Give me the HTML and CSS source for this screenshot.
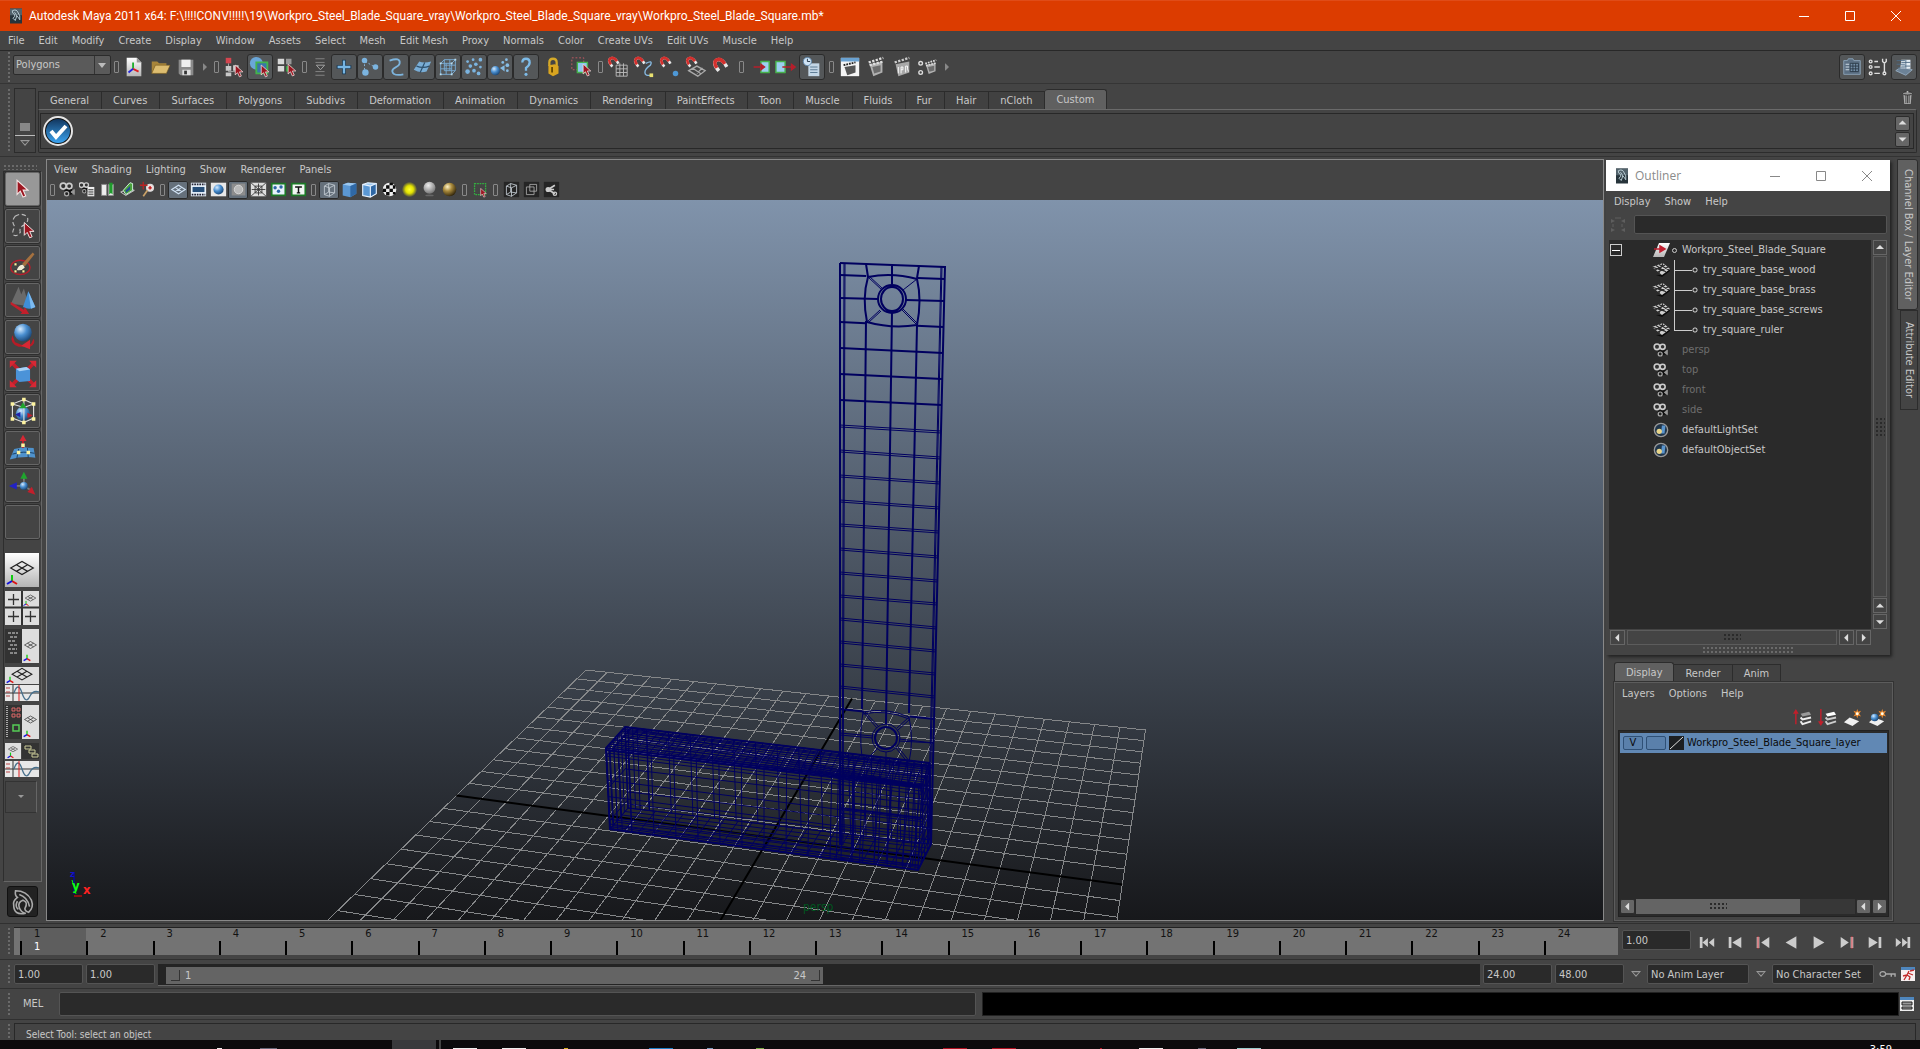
FILE: index.html
```html
<!DOCTYPE html>
<html lang="en">
<head>
<meta charset="utf-8">
<title>Autodesk Maya 2011 x64</title>
<link rel="stylesheet" href="styles.css">
</head>
<body>
<svg class="defs" aria-hidden="true">
  <defs>
    <radialGradient id="gBlue" cx=".35" cy=".3" r=".8"><stop offset="0" stop-color="#d5ebff"/><stop offset=".45" stop-color="#4a8fd0"/><stop offset="1" stop-color="#123a66"/></radialGradient>
    <radialGradient id="gGrey" cx=".4" cy=".3" r=".8"><stop offset="0" stop-color="#eee"/><stop offset="1" stop-color="#666"/></radialGradient>
    <radialGradient id="gGold" cx=".35" cy=".3" r=".8"><stop offset="0" stop-color="#fff4c8"/><stop offset=".4" stop-color="#a98a3c"/><stop offset="1" stop-color="#1e1503"/></radialGradient>
    <radialGradient id="gSun"><stop offset="0" stop-color="#ffff30"/><stop offset=".5" stop-color="#e2e200"/><stop offset="1" stop-color="#e2e200" stop-opacity="0"/></radialGradient>
    <linearGradient id="gWhite" x2="0" y2="1"><stop offset="0" stop-color="#fff"/><stop offset="1" stop-color="#b5b5b5"/></linearGradient>
    <linearGradient id="gCheck" x2="0" y2="1"><stop offset="0" stop-color="#12365e"/><stop offset="1" stop-color="#3aa3f0"/></linearGradient>
  </defs>
  <symbol id="cursor" viewBox="0 0 12 18"><path d="M1 1v13l3-3 2.500 5.500 2.500-1-2.400-5.500H11z" fill="#9c1620" stroke="#f4e4e4"/></symbol>
  <symbol id="maya" viewBox="0 0 16 20"><path d="M0 0h16v20H0z" fill="#27343b"/><path d="M0 0h16v9H0z" fill="#52626b"/><path d="M3 3q6-3 8 3 3 3 2 9-2-4-4-5l-2 6-3-3q4-3 2-5-3-1-3-5zM6 5l4 6" fill="none" stroke="#b9cdd4" stroke-width="1.300"/></symbol>
  <symbol id="new" viewBox="0 0 24 24"><path d="M4 2h11l5 5v15H4z" fill="url(#gWhite)"/><path d="M15 2v5h5z" fill="#999"/><path d="M11 14V7" stroke="#1fae2d" stroke-width="2"/><path d="M11 14l6 3" stroke="#d22" stroke-width="2"/><path d="M11 14l-5 4" stroke="#22d" stroke-width="2"/></symbol>
  <symbol id="open" viewBox="0 0 24 24"><path d="M3 19V6h6l2 2h8v4z" fill="#a8853a"/><path d="M3 19l4-9h16l-4 9z" fill="#ddbd70" stroke="#6e5317" stroke-width=".6"/></symbol>
  <symbol id="save" viewBox="0 0 24 24"><path d="M4 4h16v17H6l-2-2z" fill="#8a8a8a"/><path d="M7 4h10v8H7z" fill="#eee"/><path d="M8 15h9v6H8z" fill="#ddd"/><path d="M10 16h3v4h-3z" fill="#333"/></symbol>
  <symbol id="hier" viewBox="0 0 24 24"><path d="M6 8v9h7" stroke="#aaa" fill="none"/><path d="M3 2h6v6H3z" fill="#d3454f"/><path d="M3 11h6v5H3zM3 18h6v4H3zM11 10h6v6h-6z" fill="#c8c8c8"/><use href="#cursor" x="12" y="9" width="11" height="15"/></symbol>
  <symbol id="obj" viewBox="0 0 24 24"><circle cx="8" cy="8" r="7" fill="#6aa6d8"/><path d="M8 7h12v12H8z" fill="#3a75a8" stroke="#43b54b" stroke-width="2"/><use href="#cursor" x="12" y="9" width="11" height="15"/></symbol>
  <symbol id="comp" viewBox="0 0 24 24"><path d="M3 3h7v6H3zM3 11h7v6H3z" fill="#d8d8d8"/><path d="M12 3h6v6h-6z" fill="#999"/><path d="M12 11h6v6h-6z" fill="#35a040"/><use href="#cursor" x="13" y="8" width="11" height="15"/></symbol>
  <symbol id="bars" viewBox="0 0 24 24"><path d="M7 3h10M7 7h10M7 17h10M7 21h10" stroke="#888"/><path d="M8 10h9l-4.500 5z" fill="none" stroke="#aaa"/></symbol>
  <symbol id="plus" viewBox="0 0 24 24"><path d="M12 4v16M4 12h16" stroke="#17364f" stroke-width="4"/><path d="M12 5v14M5 12h14" stroke="#76b5e4" stroke-width="2.500"/></symbol>
  <symbol id="nodes" viewBox="0 0 24 24"><path d="M6 5v13M7 6l10 6" stroke="#8bb9dd" stroke-dasharray="2 2"/><g fill="#7bb4e0"><circle cx="6" cy="5" r="3"/><circle cx="7" cy="18" r="3.500"/><circle cx="18" cy="12" r="3"/></g></symbol>
  <symbol id="curve" viewBox="0 0 24 24"><path d="M5 5q12-4 11 3c-1 5-9 4-8 9q1 5 12 3" fill="none" stroke="#7db4dd" stroke-width="2"/></symbol>
  <symbol id="patch" viewBox="0 0 24 24"><path d="M3 15l6-9q5 2 13 0l-5 11q-8 2-14-2z" fill="#79add6"/><path d="M6 11q7 3 14 0M15 7l-5 11" stroke="#2d506d" fill="none" stroke-width="1.300"/></symbol>
  <symbol id="lattice" viewBox="0 0 24 24"><path d="M4 8h12v12H4zM8 4h12v12H8zM4 14h12M10 8v12M14 4v12M8 10h12M4 8l4-4M16 8l4-4M16 20l4-4" fill="none" stroke="#79add6"/><path d="M3 7h2v2H3zM15 7h2v2h-2zM3 19h2v2H3zM15 19h2v2h-2zM19 3h2v2h-2z" fill="#bde"/></symbol>
  <symbol id="parts" viewBox="0 0 24 24"><g fill="#7bb4e0"><circle cx="5" cy="6" r="1.500"/><circle cx="11" cy="4" r="1.500"/><circle cx="19" cy="4" r="2"/><circle cx="8" cy="11" r="2"/><circle cx="14" cy="9" r="2"/><circle cx="19" cy="12" r="1.500"/><circle cx="5" cy="17" r="2.500"/><circle cx="12" cy="16" r="2"/><circle cx="17" cy="19" r="2"/></g></symbol>
  <symbol id="emit" viewBox="0 0 24 24"><circle cx="7" cy="16" r="5" fill="url(#gBlue)"/><path d="M12 13l5-3v7z" fill="#86bce4"/><g fill="#86bce4"><circle cx="19" cy="4" r="1.500"/><circle cx="15" cy="7" r="1.500"/><circle cx="20" cy="10" r="2"/><circle cx="20" cy="16" r="1.500"/></g></symbol>
  <symbol id="quest" viewBox="0 0 24 24"><path d="M8 7q0-4 4-4t4 4q0 3-4 6v3" fill="none" stroke="#7dbbe8" stroke-width="2.500"/><circle cx="12" cy="20" r="1.700" fill="#7dbbe8"/></symbol>
  <symbol id="lock" viewBox="0 0 24 24"><path d="M8 11V7q0-4 4-4t4 4v4" fill="none" stroke="#d4a929" stroke-width="2.500"/><path d="M7 10l7-1 4 2v8l-6 3-5-3z" fill="#d9a520"/><path d="M11 12v6" stroke="#664800" stroke-width="2"/></symbol>
  <symbol id="selrect" viewBox="0 0 24 24"><path d="M2 2h13v13H2z" fill="none" stroke="#c65b64" stroke-dasharray="2 2"/><path d="M8 7h11v11H8z" fill="#8ec6ec" stroke="#45b34c" stroke-width="1.500"/><use href="#cursor" x="13" y="8" width="11" height="15"/></symbol>
  <symbol id="magnet" viewBox="0 0 24 24"><path d="M7 14Q0 6 5 3q5-2 10 7" fill="none" stroke="#e8e8e8" stroke-width="3.500"/><path d="M5 11Q1 5 5 3q4-2 8 4" fill="none" stroke="#d3302d" stroke-width="3.500"/></symbol>
  <symbol id="mgrid" viewBox="0 0 24 24"><path d="M10 10h12v12H10zM14 8v14M18 8v14M10 14h12M10 18h12" fill="none" stroke="#bbb"/><use href="#magnet" width="20" height="20"/></symbol>
  <symbol id="mcurve" viewBox="0 0 24 24"><path d="M14 8q8-4 5 2-6 4-6 8 0 4 7 3" fill="none" stroke="#86b8df" stroke-width="1.500"/><path d="M18 19h4v4h-4z" fill="#e8e070"/><use href="#magnet" width="20" height="20"/></symbol>
  <symbol id="mpoint" viewBox="0 0 24 24"><circle cx="18" cy="19" r="3" fill="#4e98d6"/><use href="#magnet" width="20" height="20"/></symbol>
  <symbol id="mplane" viewBox="0 0 24 24"><path d="M4 16l9-5 9 5-8 6zM8 13l9 6M13 19l6-6" fill="none" stroke="#aaa" stroke-width="1.400"/><use href="#magnet" width="20" height="20"/></symbol>
  <symbol id="mlive" viewBox="0 0 24 24"><use href="#magnet" x="1" y="1" width="26" height="26"/></symbol>
  <symbol id="inp" viewBox="0 0 24 24"><path d="M13 6h9v12h-9z" fill="#9ccff0" stroke="#47b24b" stroke-width="1.500"/><path d="M5 12h10M13 9l4 3-4 3z" stroke="#b51f2b" fill="#b51f2b" stroke-width="1.500"/></symbol>
  <symbol id="outp" viewBox="0 0 24 24"><path d="M1 6h10v12H1z" fill="#9ccff0" stroke="#47b24b" stroke-width="1.500"/><path d="M8 12h11M18 9l4 3-4 3z" stroke="#b51f2b" fill="#b51f2b" stroke-width="1.500"/></symbol>
  <symbol id="hist" viewBox="0 0 24 24"><path d="M8 8h12v14H8z" fill="#c3d6e6"/><path d="M10 12h8M10 15h8M10 18h8" stroke="#55748e"/><circle cx="7" cy="6" r="4.500" fill="#cfe3f5" stroke="#5d86aa"/><path d="M7 3v3h3" stroke="#234" fill="none"/></symbol>
  <symbol id="clap" viewBox="0 0 24 24"><path d="M5 9L19 6v12L9 22z" fill="#b0b0b0"/><path d="M8 12l9-2v7l-7 2z" fill="#6c6c6c"/><path d="M4 7l16-5M5 10l15-4" stroke="#ddd" stroke-width="2.500" stroke-dasharray="2.500 1.500"/></symbol>
  <symbol id="rview" viewBox="0 0 24 24"><path d="M2 2h20v20H2z" fill="#f5f5f5"/><path d="M2 2h20v4H2z" fill="#6aa2d2"/><path d="M6 12l12-2v8l-9 3z" fill="#555"/><path d="M5 10l13-3" stroke="#222" stroke-width="2" stroke-dasharray="2 1"/></symbol>
  <symbol id="ipr" viewBox="0 0 24 24"><path d="M5 9L20 6v12L8 22z" fill="#a8a8a8"/><path d="M8 12v7M11 19v-7h2v3h-2M16 18v-7h2v3l1 3" stroke="#fff" fill="none"/><path d="M4 7l16-5" stroke="#ccc" stroke-width="2.500" stroke-dasharray="2.500 1.500"/></symbol>
  <symbol id="rset" viewBox="0 0 24 24"><circle cx="4" cy="8" r="2" fill="none" stroke="#ddd" stroke-width="1.500"/><circle cx="4" cy="18" r="2" fill="none" stroke="#ddd" stroke-width="1.500"/><use href="#clap" x="6" y="2" width="18" height="20"/></symbol>
  <symbol id="chan" viewBox="0 0 24 24"><path d="M3 5h4l1-2h5l1 2h7v15H3z" fill="#5b6f83" stroke="#8ba3b8"/><path d="M10 8h9v9h-9zM13 8v9M16 8v9M10 11h9M10 14h9" fill="#7590a8" stroke="#2b3a48"/><path d="M5 9h4M5 12h4M5 15h4" stroke="#d8e4ee"/></symbol>
  <symbol id="tools" viewBox="0 0 24 24"><g fill="none" stroke="#ddd" stroke-width="1.500"><circle cx="4" cy="6" r="1.500"/><circle cx="4" cy="12" r="1.500"/><circle cx="4" cy="19" r="1.500"/><path d="M8 6h4M8 12h6M8 19h6M17 3v3l2 2 2-2V3M19 8v10"/><circle cx="19" cy="19" r="1.500"/></g></symbol>
  <symbol id="attr" viewBox="0 0 24 24"><path d="M3 16l6-4 12 3-7 6z" fill="#6c8297" stroke="#94aabd"/><path d="M9 4h10v10H8z" fill="#e4edf4"/><path d="M4 5h9M4 9h9M5 13h8M14 4v10M9 7h10M9 11h10" stroke="#4e6a84"/></symbol>
  <symbol id="trash" viewBox="0 0 16 20"><path d="M3 6h10l-1 12H4z" fill="#aaa"/><path d="M6 7v10M8 7v10M10 7v10" stroke="#333"/><ellipse cx="8" cy="5" rx="6" ry="2" fill="#999" stroke="#222"/><path d="M7 2h2v2H7z" fill="#bbb"/></symbol>
  <symbol id="cam" viewBox="0 0 20 20"><path d="M6 10l9-1 2 6-9 3z" fill="#111"/><path d="M14 13l4-3v6z" fill="#999" stroke="#999"/><circle cx="5" cy="6" r="3.500" fill="#333" stroke="#ccc" stroke-width="2"/><circle cx="12" cy="6" r="3.200" fill="#333" stroke="#ccc" stroke-width="2"/><circle cx="9" cy="15" r="2.500" fill="#222" stroke="#aaa" stroke-width="1.500"/></symbol>
  <symbol id="camlist" viewBox="0 0 20 20"><use href="#cam" x="-1" y="-1" width="16" height="18"/><path d="M10 7h8v11h-8z" fill="#eee"/><path d="M11 10h6M11 12h6M11 14h6M11 16h6" stroke="#444"/></symbol>
  <symbol id="book" viewBox="0 0 20 20"><path d="M3 4h6v13H3zM11 4h6v13h-6z" fill="#eee" stroke="#888"/><path d="M12 2h4v14l-2-2-2 2z" fill="#1f9c2c"/></symbol>
  <symbol id="imgp" viewBox="0 0 20 20"><path d="M2 13l10-4 6 2-10 6z" fill="none" stroke="#ddd"/><path d="M5 11l8-9 3 1v8l-8 5z" fill="#4aa23b" stroke="#dfe"/><path d="M8 11l5-5v4l-5 4z" fill="#234b94"/></symbol>
  <symbol id="pan" viewBox="0 0 20 20"><circle cx="13" cy="8" r="4" fill="#f6dede" stroke="#ddd" stroke-width="1.500"/><path d="M10 11l-5 7" stroke="#c9a168" stroke-width="2"/><path d="M5 1v9M1 5h9" stroke="#b22" stroke-width="1.500"/><path d="M13 6v4M11 8h4" stroke="#b11" stroke-width="1.500"/></symbol>
  <symbol id="grid" viewBox="0 0 20 20"><path d="M2 10l8-5 8 5-8 5zM6 7.500l8 5M14 7.500l-8 5" fill="none" stroke="#cfe0f2" stroke-width="1.300"/></symbol>
  <symbol id="film" viewBox="0 0 20 20"><path d="M1 2h18v16H1z" fill="#e8f1fa"/><path d="M2 4h16M2 16h16" stroke="#223" stroke-width="2" stroke-dasharray="2 1"/><path d="M3 7h14v6H3z" fill="#264e78"/></symbol>
  <symbol id="res" viewBox="0 0 20 20"><path d="M1 2h18v16H1z" fill="#e8e8e8"/><circle cx="10" cy="10" r="6" fill="url(#gBlue)"/></symbol>
  <symbol id="gate" viewBox="0 0 20 20"><path d="M2 3h16v14H2z" fill="#8d8d8d"/><circle cx="10" cy="10" r="5" fill="#b9b9b9" stroke="#ddd"/></symbol>
  <symbol id="field" viewBox="0 0 20 20"><path d="M1 2h18v16H1z" fill="#ddd"/><path d="M1 2l18 16M19 2L1 18M10 3v14M2 10h16M6 6h8v8H6z" fill="none" stroke="#333"/></symbol>
  <symbol id="safe" viewBox="0 0 20 20"><path d="M2 3h16v14H2z" fill="#e8f2fa" stroke="#1c7a26" stroke-width="2"/><g fill="#2b65a5"><circle cx="6" cy="8" r="2"/><circle cx="13" cy="7" r="2"/><circle cx="10" cy="12" r="2"/></g></symbol>
  <symbol id="title" viewBox="0 0 20 20"><path d="M2 3h16v14H2z" fill="#f2f7f2" stroke="#1c7a26" stroke-width="2"/><path d="M6 7h8M10 7v7M8 14h4" stroke="#111" stroke-width="1.700"/></symbol>
  <symbol id="wcube" viewBox="0 0 20 20"><path d="M4 6l5-3 7 2v9l-6 4-6-2zM4 6l6 2 6-3M10 8v10M9 3v10l-5 3M9 13l7 1" fill="none" stroke="#c4ccd3"/></symbol>
  <symbol id="scube" viewBox="0 0 20 20"><path d="M2 4l6-2 10 1v12l-7 4-9-2z" fill="#5b98d4"/><path d="M2 4l6-2 10 1-7 3z" fill="#9cc8ef"/><path d="M11 6l7-3v12l-7 4z" fill="#2f68a5"/></symbol>
  <symbol id="ecube" viewBox="0 0 20 20"><use href="#scube" width="20" height="20"/><path d="M2 4l6-2 10 1v12l-7 4-9-2zM2 4l9 2 7-3M11 6v13" fill="none" stroke="#e8f3ff" stroke-width="1.300"/></symbol>
  <symbol id="checker" viewBox="0 0 20 20"><circle cx="10" cy="10" r="8" fill="#eee"/><path d="M6 5h4v4H6zM14 5h3v4h-3zM10 9h4v4h-4zM2 9h4v4H2zM6 13h4v4H6zM10 2h4v3h-4zM14 13h3v3h-3z" fill="#0a0a0a"/></symbol>
  <symbol id="sun" viewBox="0 0 20 20"><circle cx="10" cy="10" r="9" fill="url(#gSun)"/></symbol>
  <symbol id="gball" viewBox="0 0 20 20"><circle cx="10" cy="8" r="7" fill="url(#gGrey)"/><ellipse cx="10" cy="17" rx="5" ry="1" fill="#666"/></symbol>
  <symbol id="yball" viewBox="0 0 20 20"><circle cx="10" cy="10" r="8" fill="url(#gGold)"/></symbol>
  <symbol id="iso" viewBox="0 0 20 20"><path d="M3 3h13v13H3z" fill="none" stroke="#33b040" stroke-width="1.500" stroke-dasharray="2 1"/><use href="#cursor" x="9" y="8" width="9" height="12"/></symbol>
  <symbol id="xray" viewBox="0 0 20 20"><path d="M1 1h18v18H1z" fill="#252525"/><use href="#wcube" width="20" height="20"/></symbol>
  <symbol id="xsq" viewBox="0 0 20 20"><path d="M1 1h18v18H1z" fill="#252525"/><path d="M4 7h9v9H4zM8 4h8v8H8z" fill="none" stroke="#aaa"/></symbol>
  <symbol id="share" viewBox="0 0 20 20"><path d="M1 1h18v18H1z" fill="#252525"/><path d="M6 10l8-5M6 10l8 5M5 10h8" stroke="#ccc" stroke-width="2"/><circle cx="6" cy="10" r="3" fill="#ccc"/><circle cx="14" cy="15" r="2" fill="none" stroke="#ccc" stroke-width="1.500"/></symbol>
  <symbol id="t-lasso" viewBox="0 0 34 34"><path d="M8 6q8-5 14 1 2 5-4 9-6 3-4 8-4 6-8 3-2-4 2-9-5-6 0-12z" fill="none" stroke="#bbb" stroke-width="1.300" stroke-dasharray="5 3"/><use href="#cursor" x="17" y="12" width="14" height="20"/></symbol>
  <symbol id="t-paint" viewBox="0 0 34 34"><ellipse cx="14" cy="22" rx="11" ry="8" fill="none" stroke="#b2202c" stroke-width="1.700"/><path d="M16 18L28 5l2 2-11 14z" fill="#a5713f"/><path d="M10 25q2-6 7-6l2 3q-3 4-9 3z" fill="#f2ecd5"/><path d="M7 17h3v3H7zM7 25h3v3H7zM16 25h3v3h-3z" fill="#fdf3a0" stroke="#222" stroke-width=".5"/></symbol>
  <symbol id="t-move" viewBox="0 0 34 34"><path d="M3 22L12 2l7 20zM10 22l8-18 6 20z" fill="#6a6a6a"/><path d="M17 25l6-18 8 18q-7 4-14 0z" fill="#3f8ed6"/><path d="M23 7l8 18-5 2z" fill="#7cbaf0"/><path d="M3 19l15 9 1-3 5 8-10 0 2-2L3 22z" fill="#c21f2b"/></symbol>
  <symbol id="t-rot" viewBox="0 0 34 34"><path d="M5 15q-4 9 7 13h13q7-3 4-9l-3 6-10 1-8-3z" fill="#b71b26"/><circle cx="17" cy="12" r="10" fill="url(#gBlue)"/><path d="M25 20l-10 7 10 4z" fill="#d62834"/></symbol>
  <symbol id="t-scale" viewBox="0 0 34 34"><path d="M4 4l26 26M30 4L4 30" stroke="#c21f2b" stroke-width="4"/><path d="M2 2h8l-8 8zM32 2v8l-8-8zM2 32v-8l8 8zM32 32h-8l8-8z" fill="#d62834"/><path d="M9 11l12-2 4 3v13l-12 1-4-3z" fill="#4b93d8"/><path d="M9 11l12-2 4 3-12 2z" fill="#a9d2f5"/></symbol>
  <symbol id="t-manip" viewBox="0 0 34 34"><circle cx="17" cy="20" r="8" fill="url(#gBlue)"/><path d="M5 9l13-5 11 5v16l-11 5-13-5zM18 4v26M5 9l13 4 11-4" fill="none" stroke="#ddd" stroke-width="1.300"/><path d="M17 7l4 7h-8z" fill="#1fa52d"/><path d="M8 21l6-3v6z" fill="#22a"/><path d="M28 22l-6-3v6z" fill="#c21f2b"/><path d="M3 7h4v4H3zM16 2h4v4h-4zM27 7h4v4h-4zM3 24h4v4H3zM27 24h4v4h-4zM16 28h4v4h-4z" fill="#fdf3a0"/></symbol>
  <symbol id="t-soft" viewBox="0 0 34 34"><path d="M2 30l5-12q6-1 10-2 6 1 12 1l2 11q-14-2-29 2z" fill="#4f92cc"/><path d="M5 24q12-4 25-1M12 18l-2 11M22 17l1 11" fill="none" stroke="#12395f"/><path d="M17 17V8" stroke="#c21f2b" stroke-width="2"/><path d="M17 2l4 7h-8z" fill="#d62834"/><path d="M15 12h4v4h-4zM10 20h4v4h-4zM21 20h4v4h-4z" fill="#fdf3a0"/></symbol>
  <symbol id="t-show" viewBox="0 0 34 34"><path d="M18 18V8M18 18l8 5M18 18H8" stroke="#777" stroke-width="2"/><path d="M18 2l4 8h-8z" fill="#1fa52d"/><path d="M1 18l9-4v8z" fill="#2222c4"/><path d="M31 28l-4-9-5 6z" fill="#c21f2b"/><circle cx="18" cy="18" r="4.500" fill="url(#gBlue)"/></symbol>
  <symbol id="plane" viewBox="0 0 34 34"><path d="M5 16l12-7 12 7-12 7zM11 12.500l12 7M23 12.500l-12 7" fill="none" stroke="#222" stroke-width="1.300"/></symbol>
  <symbol id="axis" viewBox="0 0 12 12"><path d="M6 7V1" stroke="#1c1" stroke-width="2"/><path d="M6 7l5 3" stroke="#d11" stroke-width="2"/><path d="M6 7l-5 3" stroke="#11d" stroke-width="2"/></symbol>
  <symbol id="l-single" viewBox="0 0 34 34"><path d="M0 0h34v34H0z" fill="url(#gWhite)"/><use href="#plane" width="34" height="32"/><use href="#axis" x="1" y="21" width="12" height="12"/></symbol>
  <symbol id="l-four" viewBox="0 0 34 34"><path d="M0 0h34v34H0z" fill="#ddd"/><path d="M0 16.500h34M17 0v34" stroke="#333" stroke-width="2"/><path d="M8.500 3v11M3 8.500h11M8.500 20v11M3 25.500h11M25.500 20v11M20 25.500h11" stroke="#333" stroke-width="1.300"/><use href="#plane" x="17" y="0" width="17" height="15"/><use href="#axis" x="18" y="9" width="6" height="7"/></symbol>
  <symbol id="l-out" viewBox="0 0 34 34"><path d="M0 0h17v34H0z" fill="#333"/><path d="M17 0h17v34H17z" fill="#ddd"/><path d="M3 4h10M5 8h7M3 12h8M5 16h8M3 20h9M5 24h7" stroke="#ddd" stroke-dasharray="3 1"/><use href="#plane" x="17" y="8" width="17" height="17"/><use href="#axis" x="18" y="25" width="8" height="8"/></symbol>
  <symbol id="graph" viewBox="0 0 34 16"><path d="M0 0h34v16H0z" fill="#e8e8e8"/><path d="M0 8h34" stroke="#333"/><path d="M1 3h4M1 7h4M1 11h4" stroke="#b44"/><path d="M8 0v16" stroke="#333"/><path d="M9 8q4-12 8 0t8 3q3-6 9-4" fill="none" stroke="#48708c" stroke-width="1.300"/><path d="M14 0v16" stroke="#e02020"/></symbol>
  <symbol id="l-graph" viewBox="0 0 34 34"><path d="M0 0h34v17H0z" fill="#ddd"/><use href="#plane" x="2" y="-6" width="30" height="28"/><use href="#axis" x="1" y="9" width="8" height="8"/><use href="#graph" y="18" width="34" height="16"/></symbol>
  <symbol id="l-hyper" viewBox="0 0 34 34"><path d="M0 0h17v34H0z" fill="#333"/><path d="M17 0h17v34H17z" fill="#ddd"/><path d="M2 1v32" stroke="#aaa" stroke-width="2" stroke-dasharray="1 1"/><path d="M7 3h3v3H7zM12 3h3v3h-3zM7 9h3v3H7zM12 9h3v3h-3z" fill="none" stroke="#d66"/><path d="M8 20h6v6H8z" fill="none" stroke="#5c5" stroke-width="1.500"/><use href="#plane" x="17" y="6" width="17" height="18"/><use href="#axis" x="18" y="25" width="8" height="8"/></symbol>
  <symbol id="l-persp" viewBox="0 0 34 34"><path d="M0 0h16v16H0z" fill="#ddd"/><path d="M17 0h17v16H17z" fill="#333"/><use href="#plane" width="16" height="13"/><use href="#axis" x="2" y="9" width="7" height="7"/><path d="M20 3h6v3h-6zM24 7h6v3h-6zM27 11h6v3h-6z" fill="none" stroke="#cc9"/><use href="#graph" y="18" width="34" height="16"/></symbol>
  <symbol id="m-big" viewBox="0 0 30 30"><path d="M7 3q12 0 17 10 3 8-3 13-4-1-4-4 4-7-2-9-6 2-4 8 2 6 7 6Q5 30 5 18q-1-4 4-8Q6 8 7 3zm4 4q9 3 11 13M9 14q-3 6 1 9" fill="none" stroke="#aaa" stroke-width="1.700"/></symbol>
  <symbol id="mesh" viewBox="0 0 18 14"><path d="M4 12l6 2 8-6v-2l-8 6z" fill="#0c0c0c"/><path d="M0 4l11-4 7 6-8 6z" fill="#d0d0d0"/><path d="M0 4l12 4M4 2.500L14 9M7 1.500L17 7M3 7l10-5M6 9l10-5M11 0L7 10" stroke="#2a2a2a" stroke-width="1.200"/></symbol>
  <symbol id="xform" viewBox="0 0 18 16"><path d="M7 1h11l-6 14H1z" fill="url(#gWhite)"/><path d="M2 7h7M8 4l5 3-5 3z" fill="#c02030" stroke="#c02030" stroke-width="1.500"/></symbol>
  <symbol id="set" viewBox="0 0 18 18"><circle cx="9" cy="9" r="7.500" fill="#20354a" stroke="#999" stroke-width="1.500"/><path d="M10 4h4l-1 9h-4z" fill="#5a94cc"/><circle cx="7" cy="10.500" r="3" fill="#e8d58a"/></symbol>
  <symbol id="ly-up" viewBox="0 0 20 20"><path d="M3 3v14" stroke="#c21f2b" stroke-width="1.500"/><path d="M3 1l3 5H0z" fill="#c21f2b"/><path d="M8 6l9-2 2 3-9 2z" fill="#999"/><path d="M8 10l2 2 9-2M8 14l2 3 9-3" fill="none" stroke="#eee" stroke-width="2"/></symbol>
  <symbol id="ly-dn" viewBox="0 0 20 20"><path d="M3 1v14" stroke="#c21f2b" stroke-width="1.500"/><path d="M3 19l3-5H0z" fill="#c21f2b"/><path d="M8 6l9-2 2 3-9 2z" fill="#fff"/><path d="M8 10l2 2 9-2M8 14l2 3 9-3" fill="none" stroke="#ccc" stroke-width="2"/></symbol>
  <symbol id="star" viewBox="0 0 10 10"><path d="M5 0l1 3 3-1-2 3 2 3-3-1-1 3-1-3-3 1 2-3-2-3 3 1z" fill="#f08a2c"/><circle cx="5" cy="5" r="1.500" fill="#ffe"/></symbol>
  <symbol id="ly-new" viewBox="0 0 20 20"><path d="M1 15l6-5 10 4-7 5z" fill="#f0f0f0"/><use href="#star" x="10" y="1" width="10" height="10"/></symbol>
  <symbol id="ly-sel" viewBox="0 0 20 20"><path d="M1 15l6-5 10 4-7 5z" fill="#f0f0f0"/><circle cx="7" cy="10" r="4" fill="url(#gBlue)"/><use href="#star" x="10" y="1" width="10" height="10"/></symbol>
  <symbol id="prefs" viewBox="0 0 14 14"><path d="M0 0h14v14H0z" fill="#f6f0f0"/><path d="M0 0h14v3H0z" fill="#4e86bd"/><path d="M8 4l-2 4-4 1M6 8l3 2-1 3M6 8l-3 5M7 6l5 2M9 4l4-1" stroke="#c22b2b" fill="none" stroke-width="1.300"/></symbol>
  <symbol id="script" viewBox="0 0 14 14"><path d="M0 0h14v14H0z" fill="#eee"/><path d="M0 0h14v3H0z" fill="#4e86bd"/><path d="M2 5h10v3H2zM2 10h10v2H2z" fill="#999" stroke="#222"/></symbol>
  <symbol id="key" viewBox="0 0 18 10"><ellipse cx="4" cy="5" rx="3" ry="2.500" fill="none" stroke="#aaa" stroke-width="1.300"/><path d="M7 5h10v3M13 5v3" stroke="#aaa" fill="none" stroke-width="1.500"/></symbol>
</svg>

<header class="titlebar">
  <svg class="logo"><use href="#maya"/></svg>
  <h1>Autodesk Maya 2011 x64: F:\!!!!CONV!!!!!\19\Workpro_Steel_Blade_Square_vray\Workpro_Steel_Blade_Square_vray\Workpro_Steel_Blade_Square.mb*</h1>
  <div class="winctl">
    <button aria-label="Minimize"><svg viewBox="0 0 10 10"><path d="M0 5.500h10"/></svg></button>
    <button aria-label="Maximize"><svg viewBox="0 0 10 10"><path d="M.5.5h9v9h-9z"/></svg></button>
    <button aria-label="Close"><svg viewBox="0 0 10 10"><path d="M0 0l10 10M10 0L0 10"/></svg></button>
  </div>
</header>

<nav class="menubar">
  <button>File</button><button>Edit</button><button>Modify</button><button>Create</button><button>Display</button><button>Window</button><button>Assets</button><button>Select</button><button>Mesh</button><button>Edit Mesh</button><button>Proxy</button><button>Normals</button><button>Color</button><button>Create UVs</button><button>Edit UVs</button><button>Muscle</button><button>Help</button>
</nav>

<div class="statusline">
  <i class="grip"></i>
  <div class="combo"><select aria-label="Menu set"><option>Polygons</option></select></div>
  <i class="sep s10"></i>
  <button class="ib" aria-label="New scene"><svg><use href="#new"/></svg></button>
  <button class="ib" aria-label="Open scene"><svg><use href="#open"/></svg></button>
  <button class="ib" aria-label="Save scene"><svg><use href="#save"/></svg></button>
  <i class="sep more s12"></i><i class="sep s10"></i>
  <button class="ib" aria-label="Select by hierarchy"><svg><use href="#hier"/></svg></button>
  <button class="ib on" aria-label="Select by object"><svg><use href="#obj"/></svg></button>
  <button class="ib" aria-label="Select by component"><svg><use href="#comp"/></svg></button>
  <i class="sep s10"></i>
  <button class="ib slim" aria-label="Selection mask"><svg><use href="#bars"/></svg></button>
  <button class="ib on" aria-label="Handles"><svg><use href="#plus"/></svg></button>
  <button class="ib on" aria-label="Joints"><svg><use href="#nodes"/></svg></button>
  <button class="ib on" aria-label="Curves"><svg><use href="#curve"/></svg></button>
  <button class="ib on" aria-label="Surfaces"><svg><use href="#patch"/></svg></button>
  <button class="ib on" aria-label="Deformations"><svg><use href="#lattice"/></svg></button>
  <button class="ib on" aria-label="Dynamics"><svg><use href="#parts"/></svg></button>
  <button class="ib on" aria-label="Rendering"><svg><use href="#emit"/></svg></button>
  <button class="ib on" aria-label="Miscellaneous"><svg><use href="#quest"/></svg></button>
  <button class="ib wide" aria-label="Lock selection"><svg><use href="#lock"/></svg></button>
  <button class="ib wide" aria-label="Highlight selection"><svg><use href="#selrect"/></svg></button>
  <i class="sep s10"></i>
  <button class="ib" aria-label="Snap to grids"><svg><use href="#mgrid"/></svg></button>
  <button class="ib" aria-label="Snap to curves"><svg><use href="#mcurve"/></svg></button>
  <button class="ib" aria-label="Snap to points"><svg><use href="#mpoint"/></svg></button>
  <button class="ib" aria-label="Snap to view planes"><svg><use href="#mplane"/></svg></button>
  <button class="ib" aria-label="Make live"><svg><use href="#mlive"/></svg></button>
  <i class="sep s12"></i>
  <button class="ib" aria-label="Inputs"><svg><use href="#inp"/></svg></button>
  <button class="ib" aria-label="Outputs"><svg><use href="#outp"/></svg></button>
  <button class="ib on" aria-label="Construction history"><svg><use href="#hist"/></svg></button>
  <i class="sep s12"></i>
  <button class="ib" aria-label="Render view"><svg><use href="#rview"/></svg></button>
  <button class="ib" aria-label="Render frame"><svg><use href="#clap"/></svg></button>
  <button class="ib" aria-label="IPR render"><svg><use href="#ipr"/></svg></button>
  <button class="ib" aria-label="Render settings"><svg><use href="#rset"/></svg></button>
  <i class="sep more s12"></i>
  <div class="right">
    <button class="ib on" aria-label="Channel box"><svg><use href="#chan"/></svg></button>
    <button class="ib" aria-label="Tool settings"><svg><use href="#tools"/></svg></button>
    <button class="ib on" aria-label="Attribute editor"><svg><use href="#attr"/></svg></button>
  </div>
</div>

<section class="shelf">
  <i class="grip"></i>
  <div class="shelfmenu"><i class="sq"></i><i class="ln"></i><i class="tri"></i></div>
  <div class="shelfbody">
    <div class="tabs">
      <button>General</button><button>Curves</button><button>Surfaces</button><button>Polygons</button><button>Subdivs</button><button>Deformation</button><button>Animation</button><button>Dynamics</button><button>Rendering</button><button>PaintEffects</button><button>Toon</button><button>Muscle</button><button>Fluids</button><button>Fur</button><button>Hair</button><button>nCloth</button><button class="active">Custom</button>
      <svg class="trash"><use href="#trash"/></svg>
    </div>
    <div class="shelfbox"><div class="shelfinner">
      <button class="check" aria-label="Apply"><svg viewBox="0 0 30 30"><circle cx="15" cy="15" r="14" fill="#111" stroke="#e6e6e6" stroke-width="2"/><circle cx="15" cy="15" r="12" fill="url(#gCheck)"/><path d="M8 15l5 6 10-11" fill="none" stroke="#fff" stroke-width="4"/></svg></button>
      <div class="spin"><button class="sb up" aria-label="Previous shelf row"></button><button class="sb down" aria-label="Next shelf row"></button></div>
    </div></div>
  </div>
</section>

<main class="work">
  <aside class="toolbox">
    <i class="hgrip"></i>
    <div class="toolcol">
      <div class="tools">
        <button class="tool active" aria-label="Select"><svg class="cur"><use href="#cursor"/></svg></button>
        <button class="tool" aria-label="Lasso"><svg><use href="#t-lasso"/></svg></button>
        <button class="tool" aria-label="Paint selection"><svg><use href="#t-paint"/></svg></button>
        <button class="tool" aria-label="Move"><svg><use href="#t-move"/></svg></button>
        <button class="tool" aria-label="Rotate"><svg><use href="#t-rot"/></svg></button>
        <button class="tool" aria-label="Scale"><svg><use href="#t-scale"/></svg></button>
        <button class="tool" aria-label="Universal manipulator"><svg><use href="#t-manip"/></svg></button>
        <button class="tool" aria-label="Soft modification"><svg><use href="#t-soft"/></svg></button>
        <button class="tool" aria-label="Show manipulator"><svg><use href="#t-show"/></svg></button>
        <button class="tool" aria-label="Last tool"></button>
      </div>
      <div class="layouts">
        <button aria-label="Single view"><svg><use href="#l-single"/></svg></button>
        <button aria-label="Four view"><svg><use href="#l-four"/></svg></button>
        <button aria-label="Outliner layout"><svg><use href="#l-out"/></svg></button>
        <button aria-label="Graph layout"><svg><use href="#l-graph"/></svg></button>
        <button aria-label="Hypershade layout"><svg><use href="#l-hyper"/></svg></button>
        <button aria-label="Hypergraph layout"><svg><use href="#l-persp"/></svg></button>
        <button class="drop" aria-label="More layouts"></button>
      </div>
    </div>
    <button class="mayabtn" aria-label="Maya"><svg><use href="#m-big"/></svg></button>
  </aside>

  <section class="panel">
    <nav class="panelmenu"><button>View</button><button>Shading</button><button>Lighting</button><button>Show</button><button>Renderer</button><button>Panels</button></nav>
    <div class="paneltools">
      <i class="sep s10"></i>
      <button aria-label="Select camera"><svg><use href="#cam"/></svg></button><button aria-label="Camera attributes"><svg><use href="#camlist"/></svg></button><button aria-label="Bookmarks"><svg><use href="#book"/></svg></button><button aria-label="Image plane"><svg><use href="#imgp"/></svg></button><button aria-label="Pan and zoom"><svg><use href="#pan"/></svg></button>
      <i class="sep s11"></i>
      <button class="on" aria-label="Grid"><svg><use href="#grid"/></svg></button><button aria-label="Film gate"><svg><use href="#film"/></svg></button><button aria-label="Resolution gate"><svg><use href="#res"/></svg></button><button class="on" aria-label="Gate mask"><svg><use href="#gate"/></svg></button><button aria-label="Field chart"><svg><use href="#field"/></svg></button><button aria-label="Safe action"><svg><use href="#safe"/></svg></button><button aria-label="Safe title"><svg><use href="#title"/></svg></button>
      <i class="sep s11"></i>
      <button class="on" aria-label="Wireframe"><svg><use href="#wcube"/></svg></button><button aria-label="Smooth shade"><svg><use href="#scube"/></svg></button><button aria-label="Wireframe on shaded"><svg><use href="#ecube"/></svg></button><button aria-label="Textured"><svg><use href="#checker"/></svg></button><button aria-label="Use all lights"><svg><use href="#sun"/></svg></button><button aria-label="Shadows"><svg><use href="#gball"/></svg></button><button aria-label="High quality"><svg><use href="#yball"/></svg></button>
      <i class="sep s11"></i>
      <button aria-label="Isolate select"><svg><use href="#iso"/></svg></button>
      <i class="sep s11"></i>
      <button aria-label="X-ray"><svg><use href="#xray"/></svg></button><button aria-label="X-ray components"><svg><use href="#xsq"/></svg></button><button aria-label="X-ray joints"><svg><use href="#share"/></svg></button>
    </div>
    <div class="view">
      <svg id="scene" viewBox="47 200 1556 720" preserveAspectRatio="xMidYMid slice">
        <g id="floor" class="floor"></g>
        <g id="axes" class="axes"></g>
        <g id="model" class="model"></g>
        <path d="M76 894L72 880" stroke="#0f0" /><path d="M74 896h8" stroke="#f00"/><path d="M74 894V872" stroke="#00c"/>
        <text x="72" y="890" class="ax" fill="#1f1">y</text><text x="83" y="894" class="ax" fill="#f22">x</text><text x="70" y="877" class="ax small" fill="#11c">z</text>
        <text x="803" y="911" class="cam">persp</text>
      </svg>
    </div>
  </section>

  <aside class="side">
    <div class="sidecol">
      <section class="outliner">
        <header class="otitle">
          <svg class="logo"><use href="#maya"/></svg><h2>Outliner</h2>
          <div class="winctl dark">
            <button aria-label="Minimize outliner"><svg viewBox="0 0 10 10"><path d="M0 5.500h10"/></svg></button>
            <button aria-label="Maximize outliner"><svg viewBox="0 0 10 10"><path d="M.5.5h9v9h-9z"/></svg></button>
            <button aria-label="Close outliner"><svg viewBox="0 0 10 10"><path d="M0 0l10 10M10 0L0 10"/></svg></button>
          </div>
        </header>
        <nav class="submenu"><button>Display</button><button>Show</button><button>Help</button></nav>
        <div class="filter"><svg viewBox="0 0 16 16"><path d="M1 2l4 2-4 2zM15 2l-4 2 4 2zM1 11l4 2-4 2zM15 11l-4 2 4 2z" fill="#5e5e5e"/><path d="M5 1h6M3 7v3M12 7v3" stroke="#5e5e5e"/></svg><input type="text" aria-label="Filter"></div>
        <div class="treewrap">
          <ul class="tree">
            <li class="root"><button class="fold" aria-label="Collapse"></button><svg><use href="#xform"/></svg><i class="dot"></i>Workpro_Steel_Blade_Square</li>
            <li class="kid"><svg><use href="#mesh"/></svg><i class="link"></i>try_square_base_wood</li>
            <li class="kid"><svg><use href="#mesh"/></svg><i class="link"></i>try_square_base_brass</li>
            <li class="kid"><svg><use href="#mesh"/></svg><i class="link"></i>try_square_base_screws</li>
            <li class="kid last"><svg><use href="#mesh"/></svg><i class="link"></i>try_square_ruler</li>
            <li class="dim"><svg><use href="#cam"/></svg>persp</li>
            <li class="dim"><svg><use href="#cam"/></svg>top</li>
            <li class="dim"><svg><use href="#cam"/></svg>front</li>
            <li class="dim"><svg><use href="#cam"/></svg>side</li>
            <li><svg><use href="#set"/></svg>defaultLightSet</li>
            <li><svg><use href="#set"/></svg>defaultObjectSet</li>
          </ul>
          <div class="vscroll"><button class="sb flat up" aria-label="Scroll up"></button><div class="track"><i class="dots"></i></div><button class="sb flat up" aria-label="Scroll up a page"></button><button class="sb flat down" aria-label="Scroll down"></button></div>
        </div>
        <div class="hscroll"><button class="sb flat left" aria-label="Scroll left"></button><div class="track"><i class="dots"></i></div><button class="sb flat left" aria-label="Scroll left a page"></button><button class="sb flat rt" aria-label="Scroll right"></button></div>
        <i class="hgrip mid"></i>
      </section>

      <section class="layers">
        <div class="tabs"><button class="active">Display</button><button>Render</button><button>Anim</button></div>
        <div class="layerbox">
          <nav class="submenu"><button>Layers</button><button>Options</button><button>Help</button></nav>
          <div class="layertools">
            <button aria-label="Move layer up"><svg><use href="#ly-up"/></svg></button><button aria-label="Move layer down"><svg><use href="#ly-dn"/></svg></button><button aria-label="New layer"><svg><use href="#ly-new"/></svg></button><button aria-label="New layer from selected"><svg><use href="#ly-sel"/></svg></button>
          </div>
          <div class="layerlist">
            <div class="layer"><button class="flag">V</button><button class="flag" aria-label="Display type"></button><svg viewBox="0 0 15 14"><path d="M0 0h15v14H0z" fill="#1c1f22"/><path d="M1 13L14 1" stroke="#ddd"/></svg><span>Workpro_Steel_Blade_Square_layer</span></div>
            <div class="hscroll solid"><button class="sb left" aria-label="Scroll left"></button><div class="track"><div class="thumb"><i class="dots"></i></div></div><button class="sb left" aria-label="Scroll left a page"></button><button class="sb rt" aria-label="Scroll right"></button></div>
          </div>
        </div>
      </section>
    </div>
    <div class="vtabs"><button class="active">Channel Box / Layer Editor</button><button>Attribute Editor</button></div>
  </aside>
</main>

<div class="row time">
  <i class="grip"></i>
  <div class="timeline">
    <span class="now">1<b>1</b></span><span>2</span><span>3</span><span>4</span><span>5</span><span>6</span><span>7</span><span>8</span><span>9</span><span>10</span><span>11</span><span>12</span><span>13</span><span>14</span><span>15</span><span>16</span><span>17</span><span>18</span><span>19</span><span>20</span><span>21</span><span>22</span><span>23</span><span>24</span>
  </div>
  <div class="play">
    <input class="num" type="text" value="1.00" aria-label="Current time">
    <button aria-label="Go to start"><svg viewBox="0 0 20 14"><path d="M2 1h3v12H2zM11 2v10L5 7zM18 2v10l-6-5z"/></svg></button>
    <button aria-label="Step back one frame"><svg viewBox="0 0 20 14"><path d="M3 1h3v12H3zM17 1v12L7 7z"/></svg></button>
    <button aria-label="Step back one key"><svg viewBox="0 0 20 14"><path d="M3 1h3v12H3zM17 1v12L8 7z"/><path class="red" d="M4 0h1v14H4z"/></svg></button>
    <button aria-label="Play backwards"><svg viewBox="0 0 20 14"><path d="M16 0v14L4 7z"/></svg></button>
    <button aria-label="Play forwards"><svg viewBox="0 0 20 14"><path d="M4 0v14l12-7z"/></svg></button>
    <button aria-label="Step forward one key"><svg viewBox="0 0 20 14"><path d="M14 1h3v12h-3zM3 1v12l9-6z"/><path class="red" d="M15 0h1v14h-1z"/></svg></button>
    <button aria-label="Step forward one frame"><svg viewBox="0 0 20 14"><path d="M14 1h3v12h-3zM3 1v12l10-6z"/></svg></button>
    <button aria-label="Go to end"><svg viewBox="0 0 20 14"><path d="M15 1h3v12h-3zM9 2v10l6-5zM2 2v10l6-5z"/></svg></button>
  </div>
</div>

<div class="row range">
  <i class="grip"></i>
  <input class="num" type="text" value="1.00" aria-label="Animation start">
  <input class="num" type="text" value="1.00" aria-label="Playback start">
  <div class="rangebar"><div class="rangethumb"><i></i><span>1</span><span class="end">24</span><i></i></div></div>
  <input class="num" type="text" value="24.00" aria-label="Playback end">
  <input class="num" type="text" value="48.00" aria-label="Animation end">
  <i class="tri"></i>
  <input class="set" type="text" value="No Anim Layer" aria-label="Animation layer">
  <i class="tri"></i>
  <input class="set" type="text" value="No Character Set" aria-label="Character set">
  <button class="key" aria-label="Auto keyframe"><svg><use href="#key"/></svg></button>
  <button class="tiny" aria-label="Preferences"><svg><use href="#prefs"/></svg></button>
</div>

<div class="row cmd">
  <i class="grip"></i>
  <label for="mel">MEL</label>
  <input id="mel" type="text">
  <output class="result"></output>
  <button class="tiny" aria-label="Script editor"><svg><use href="#script"/></svg></button>
</div>

<div class="row help"><i class="grip"></i><p>Select Tool: select an object</p></div>

<footer class="taskbar">
  <svg viewBox="0 0 1920 9" preserveAspectRatio="none"><path d="M392 0h44v9h-44z" fill="#39393c"/><path d="M439 0h2v9h-2z" fill="#444"/><g><path d="M217 8h5v1h-5zM453 8h24v1h-24zM502 8h24v1h-24zM1139 8h24v1h-24z" fill="#eee"/><path d="M260 8h17v1h-17zM1198 8h8v1h-8z" fill="#667"/><path d="M564 8h4v1h-4z" fill="#d8b020"/><path d="M649 8h24v1h-24z" fill="#1c80c8"/><path d="M707 8h6v1h-6z" fill="#79b"/><path d="M756 8h8v1h-8z" fill="#7a4"/><path d="M943 8h24v1h-24zM992 8h24v1h-24zM1100 8h2v1h-2z" fill="#b01020"/><path d="M1237 8h24v1h-24z" fill="#9cc"/></g></svg>
  <time>3:59</time>
</footer>
<script src="scene.js"></script>
</body>
</html>
```
FILE: styles.css
```css
* { box-sizing: border-box; }
html, body { height: 100%; }
body {
  margin: 0;
  display: flex;
  flex-direction: column;
  overflow: hidden;
  background: #444;
  color: #c8c8c8;
  font: 11px/14px "DejaVu Sans Condensed", "Noto Sans", sans-serif;
}
button, input, select { font: inherit; color: inherit; }
button { background: none; border: 0; padding: 0; margin: 0; display: flex; align-items: center; justify-content: center; flex: none; white-space: nowrap; }
h1, h2, p, ul { margin: 0; padding: 0; font-weight: normal; }
i { flex: none; font-style: normal; }
svg { display: block; flex: none; }
.defs { position: absolute; width: 0; height: 0; }

.titlebar { display: flex; align-items: center; height: 31px; flex: none; background: #dc3c00; color: #fff; padding-left: 10px; border-top: 1px solid #e04c18; }
.titlebar h1 { font: 12px/16px Roboto, sans-serif; margin-left: 7px; flex: 1; white-space: nowrap; }
.logo { width: 12px; height: 16px; }
.winctl { display: flex; }
.winctl button { width: 46px; height: 30px; }
.titlebar .winctl { margin-right: 1px; }
.winctl svg { width: 10px; height: 10px; fill: none; stroke: #fff; overflow: visible; }

.menubar { display: flex; gap: 14px; height: 20px; flex: none; padding: 1px 0 0 8px; border-bottom: 1px solid #282828; }

.statusline { display: flex; align-items: center; height: 33px; flex: none; padding-right: 3px; border-bottom: 1px solid #353535; }
.grip { width: 5px; margin: 0 1px 0 7px; align-self: stretch; background: radial-gradient(circle, #6a6a6a 1px, transparent 1px) 0 0 / 4px 4px; }
.combo { width: 98px; height: 20px; margin-bottom: 4px; position: relative; border: 1px solid #2b2b2b; border-radius: 2px; background: #5a5a5a; }
.combo select { appearance: none; width: 100%; height: 18px; border: 0; background: none; padding: 0 2px; outline: 0; }
.combo::after { content: ""; position: absolute; right: 4px; top: 7px; border: 4px solid transparent; border-top: 5px solid #bbb; }
.combo::before { content: ""; position: absolute; right: 15px; top: 0; bottom: 0; width: 1px; background: #333; }
.sep { align-self: stretch; display: flex; align-items: center; justify-content: center; }
.sep::before { content: ""; width: 3px; height: 10px; border: 1px solid #888; border-radius: 1px; }
.sep.more::before { width: 0; height: 0; border: 4px solid transparent; border-left: 4px solid #888; border-right: 0; }
.s10 { width: 10px; }
.s11 { width: 11px; }
.s12 { width: 12px; }
.ib { width: 26px; height: 26px; border-radius: 3px; }
.ib svg { width: 22px; height: 22px; }
.ib.on { background: #545759; border: 1px solid #2b2b2b; }
.ib.slim { width: 22px; }
.ib.wide { width: 28px; }
.right { display: flex; margin-left: auto; }

.shelf { display: flex; flex: none; height: 72px; padding: 4px 3px 3px 0; }
.shelfmenu { width: 22px; margin: 0 2px 0 1px; border: 1px solid #2c2c2c; display: flex; flex-direction: column; align-items: center; justify-content: flex-end; gap: 4px; padding-bottom: 6px; }
.sq { width: 10px; height: 8px; background: #888; }
.ln { width: 20px; height: 1px; background: #bbb; }
.tri { width: 10px; height: 6px; background: #999; clip-path: polygon(0 0, 100% 0, 50% 100%, 50% 70%, 80% 20%, 20% 20%, 50% 70%, 50% 100%); }
.shelfbody { flex: 1; min-width: 0; display: flex; flex-direction: column; }
.tabs { display: flex; align-items: flex-end; flex: none; }
.tabs button { height: 18px; padding: 0 12px 0 11px; border: 1px solid #2c2c2c; border-width: 1px 1px 0 0; background: #414141; }
.tabs button:first-child { border-left-width: 1px; }
.tabs button.active { height: 20px; background: #606060; border-radius: 3px 3px 0 0; }
.shelfbody .tabs { height: 21px; }
.trash { width: 13px; height: 17px; margin: 0 3px 3px auto; }
.shelfbox { flex: 1; border: 1px solid #2c2c2c; border-top-color: #6a6a6a; padding: 3px 2px 3px 1px; border-radius: 2px; }
.shelfinner { height: 100%; border: 1px solid #282828; display: flex; align-items: center; justify-content: space-between; padding: 0 3px 0 2px; }
.check svg { width: 30px; height: 30px; }
.spin { display: flex; flex-direction: column; gap: 1px; }
.sb { width: 15px; height: 15px; background: #666; border: 1px solid #2c2c2c; border-radius: 2px; }
.sb.flat { background: #444; border-color: #666; border-radius: 0; }
.sb::before { content: ""; width: 8px; height: 8px; background: #ddd; }
.up::before { clip-path: polygon(0 70%, 50% 20%, 100% 70%); }
.down::before { clip-path: polygon(0 30%, 50% 80%, 100% 30%); }
.left::before { clip-path: polygon(70% 0, 20% 50%, 70% 100%); }
.rt::before { clip-path: polygon(30% 0, 80% 50%, 30% 100%); }

.work { flex: 1; min-height: 0; display: flex; border-top: 1px solid #333; padding: 2px 0; }
.toolbox { width: 46px; flex: none; display: flex; flex-direction: column; align-items: flex-start; padding: 5px 0 4px 3px; }
.hgrip { width: 34px; height: 6px; margin-bottom: 1px; background: radial-gradient(circle, #6a6a6a 1px, transparent 1px) 0 0 / 4px 4px; }
.toolcol { flex: 1; width: 39px; border: 1px solid #2e2e2e; border-right-color: #666; border-bottom-color: #666; padding-left: 1px; }
.tools { display: flex; flex-direction: column; gap: 3px; }
.tool { width: 35px; height: 34px; border: 1px solid #666; border-radius: 2px; outline: 1px solid #2e2e2e; }
.tool svg { width: 30px; height: 30px; }
.tool svg.cur { width: 13px; height: 20px; }
.tool.active { background: #989898; }
.layouts { display: flex; flex-direction: column; gap: 4px; margin-top: 14px; }
.layouts svg { width: 34px; height: 34px; }
.layouts button { width: 34px; }
.layouts .drop { width: 32px; height: 32px; border: 1px solid #333; border-right-color: #666; }
.drop::before { content: ""; border: 3px solid transparent; border-top: 3px solid #999; margin-top: 2px; }
.mayabtn { width: 31px; height: 31px; margin: 4px 0 0 4px; background: #222; border: 1px solid #111; border-radius: 3px; }
.mayabtn svg { width: 28px; height: 28px; }

.panel { flex: 1; min-width: 0; display: flex; flex-direction: column; border: 1px solid #888; }
.panelmenu { display: flex; gap: 14px; padding-left: 7px; height: 19px; flex: none; }
.paneltools { display: flex; align-items: center; height: 21px; flex: none; }
.paneltools button { width: 20px; height: 18px; }
.paneltools svg { width: 17px; height: 17px; }
.paneltools .on { background: #65707b; box-shadow: inset 0 0 0 1px #2a2a2a; border-radius: 2px; }
.view { flex: 1; min-height: 0; background: linear-gradient(#8093ab, #17181b); overflow: hidden; }
.view svg { width: 100%; height: 100%; }
.floor { stroke: #858789; stroke-width: 1; shape-rendering: crispEdges; }
.axes { stroke: #000; stroke-width: 2; }
.model { fill: none; stroke: #00005f; stroke-width: 1; }
.model .heavy { stroke-width: 2; }
.ax { font: bold 13px "DejaVu Sans Condensed", sans-serif; }
.ax.small { font-size: 9px; }
.cam { font: 12px "DejaVu Sans Condensed", sans-serif; fill: #00561f; }

.side { width: 316px; flex: none; display: flex; gap: 3px; padding: 0 2px 0 2px; }
.sidecol { flex: 1; min-width: 0; display: flex; flex-direction: column; gap: 7px; }
.outliner { flex: 494 1 0; min-height: 0; margin: 1px 4px 0 0; display: flex; flex-direction: column; box-shadow: 2px 2px 3px #222; }
.otitle { display: flex; align-items: center; height: 31px; flex: none; background: #fff; color: #8a8a8a; padding-left: 10px; }
.otitle h2 { font: 12px/16px "Open Sans", sans-serif; margin-left: 7px; flex: 1; }
.dark svg { stroke: #888; }
.submenu { display: flex; gap: 14px; height: 22px; flex: none; padding-left: 8px; }
.filter { display: flex; align-items: center; gap: 8px; padding: 0 3px 0 4px; height: 23px; flex: none; }
.filter svg { width: 16px; height: 16px; }
.filter input { flex: 1; min-width: 0; height: 19px; }
input { background: #2a2a2a; border: 1px solid #545454; border-radius: 2px; outline: 0; padding: 0 3px; }
.treewrap { flex: 1; min-height: 0; display: flex; gap: 2px; margin: 4px 3px 0 3px; }
.tree { flex: 1; list-style: none; background: #2a2a2a; }
.tree li { display: flex; align-items: center; height: 20px; gap: 12px; padding-left: 43px; }
.tree svg { width: 18px; height: 16px; }
.tree .root { padding-left: 1px; gap: 0; }
.fold { width: 12px; height: 12px; border: 1px solid #ccc; margin-right: 30px; }
.fold::before { content: ""; width: 8px; height: 1px; background: #fff; }
.dot { width: 5px; height: 5px; border: 1px solid #ccc; border-radius: 50%; margin: 0 5px 0 2px; }
.tree .kid { gap: 0; }
.link { width: 24px; height: 20px; margin: 0 5px 0 4px; background: radial-gradient(circle at 21px 10px, #2a2a2a 1px, #ccc 2px, transparent 3px), linear-gradient(#ccc, #ccc) 0 0 / 1px 100% no-repeat, linear-gradient(#ccc, #ccc) 0 10px / 18px 1px no-repeat; }
.last .link { background: radial-gradient(circle at 21px 10px, #2a2a2a 1px, #ccc 2px, transparent 3px), linear-gradient(#ccc, #ccc) 0 0 / 1px 10px no-repeat, linear-gradient(#ccc, #ccc) 0 10px / 18px 1px no-repeat; }
.dim { color: #6e6e6e; }
.vscroll { width: 14px; display: flex; flex-direction: column; gap: 1px; }
.vscroll .sb { width: 14px; }
.track { flex: 1; border: 1px solid #5c5c5c; display: flex; align-items: center; justify-content: center; }
.dots { width: 18px; height: 9px; background: radial-gradient(circle, #2a2a2a 1px, transparent 1px) 0 0 / 4px 4px; }
.vscroll .dots { width: 10px; height: 19px; }
.hscroll { display: flex; gap: 2px; height: 15px; margin: 1px 19px 0 4px; flex: none; }
.hgrip.mid { width: 92px; height: 7px; margin: 1px auto 2px; }

.layers { flex: 258 1 0; min-height: 0; margin-left: 8px; display: flex; flex-direction: column; }
.layers .tabs button { padding: 0 11px; }
.layerbox { flex: 1; min-height: 0; border: 1px solid #5c5c5c; outline: 1px solid #333; display: flex; flex-direction: column; padding: 0 3px 3px; margin-right: 1px; }
.layerbox .submenu { padding-left: 4px; }
.layertools { display: flex; justify-content: flex-end; gap: 6px; height: 25px; align-items: center; padding-right: 2px; flex: none; }
.layertools svg { width: 19px; height: 19px; }
.layerlist { flex: 1; background: #2a2a2a; border: 1px solid #222; padding: 2px 1px; display: flex; flex-direction: column; justify-content: space-between; }
.layer { display: flex; align-items: center; gap: 3px; height: 20px; padding-left: 3px; background: #6188b4; color: #0a0a0a; white-space: nowrap; }
.layer svg { width: 15px; height: 14px; }
.flag { width: 20px; height: 14px; border: 1px solid #2f5076; border-radius: 2px; background: #5a80ab; }
.hscroll.solid { margin: 0; gap: 1px; }
.solid .track { border: 0; background: #373737; justify-content: flex-start; }
.thumb { width: 75%; height: 100%; background: #646464; display: flex; align-items: center; justify-content: center; }
.vtabs { width: 21px; flex: none; display: flex; flex-direction: column; align-items: flex-end; }
.vtabs button { writing-mode: vertical-rl; width: 18px; height: 100px; border: 1px solid #2c2c2c; }
.vtabs .active { width: 21px; height: 151px; background: #606060; border-radius: 0 3px 3px 0; }

.row { display: flex; flex: none; border-top: 1px solid #303030; }
.time { height: 36px; padding: 3px 8px 4px 0; }
.row .grip { margin-right: 2px; }
.timeline { flex: 1; display: flex; background: #737373; color: #111; padding: 0 8px 0 6px; border-top: 1px solid #222; }
.timeline span { flex: 1; border-left: 2px solid #000; border-image: linear-gradient(transparent 50%, #000 50%) 1; line-height: 11px; padding-left: 12px; display: flex; flex-direction: column; }
.timeline .now { background: #5e5e5e; }
.timeline b { color: #fff; font-weight: normal; line-height: 16px; }
.play { display: flex; align-items: center; padding-left: 4px; width: 294px; }
.play input { margin: 0 2px 2px 0; }
.num { width: 69px; height: 20px; flex: none; }
.play button { width: 28px; height: 20px; }
.play svg { width: 18px; height: 13px; fill: #ccc; margin-top: 2px; }
.play .red { fill: #e0303a; }
.range { height: 29px; padding: 4px 4px 4px 0; gap: 3px; align-items: flex-start; }
.range .grip { margin-right: -1px; }
.rangebar { flex: 1; height: 22px; background: #242424; border-bottom: 1px solid #666; padding: 3px 0 0 8px; }
.rangethumb { width: 50%; height: 17px; background: #646464; display: flex; align-items: center; gap: 5px; padding: 0 3px 0 5px; }
.rangethumb i { width: 9px; height: 11px; border: 1px solid #333; border-width: 0 1px 1px 0; }
.end { margin-left: auto; }
.range > .tri { margin: 7px 3px 0 4px; }
.set { width: 102px; height: 20px; flex: none; }
.range .key { width: 20px; height: 20px; }
.key svg { width: 17px; height: 10px; }
.tiny svg { width: 14px; height: 14px; }
.range .tiny { height: 20px; width: 16px; }
.cmd { height: 31px; padding: 3px 5px 3px 0; align-items: center; }
.cmd label { width: 45px; padding-left: 9px; flex: none; }
.cmd input { flex: 1; min-width: 0; height: 24px; margin-right: 6px; padding: 0; }
.result { flex: 1; height: 24px; background: #000; border: 1px solid #222; }
.cmd .tiny { width: 16px; }
.help { height: 21px; padding-top: 3px; }
.help p { flex: 1; border: 1px solid #282828; border-bottom: 0; margin-right: 4px; padding: 3px 0 0 11px; line-height: 15px; font-size: 10px; height: 17px; }
.taskbar { height: 9px; flex: none; background: #0c0a0c; position: relative; overflow: hidden; }
.taskbar svg { width: 100%; height: 9px; }
.taskbar time { position: absolute; right: 28px; top: 4px; color: #fff; line-height: 12px; font-size: 11px; }
```
FILE: scene.js
```js
const NS = 'http://www.w3.org/2000/svg';

function draw(parentId, d, cls) {
  const p = document.createElementNS(NS, 'path');
  p.setAttribute('d', d);
  if (cls) p.setAttribute('class', cls);
  document.getElementById(parentId).appendChild(p);
}
const seg = (a, b) => `M${a[0].toFixed(1)} ${a[1].toFixed(1)}L${b[0].toFixed(1)} ${b[1].toFixed(1)}`;
const mix = (a, b, t) => [a[0] + (b[0] - a[0]) * t, a[1] + (b[1] - a[1]) * t];

// Projective map of the unit square onto a quad given clockwise from the far left corner.
function plane([p0, p1, p2, p3]) {
  const sx = p0[0] - p1[0] + p2[0] - p3[0], sy = p0[1] - p1[1] + p2[1] - p3[1];
  const dx1 = p1[0] - p2[0], dx2 = p3[0] - p2[0], dy1 = p1[1] - p2[1], dy2 = p3[1] - p2[1];
  const den = dx1 * dy2 - dx2 * dy1;
  const g = (sx * dy2 - dx2 * sy) / den, h = (dx1 * sy - sx * dy1) / den;
  return (u, v) => {
    const w = g * u + h * v + 1;
    return [
      ((p1[0] - p0[0] + g * p1[0]) * u + (p3[0] - p0[0] + h * p3[0]) * v + p0[0]) / w,
      ((p1[1] - p0[1] + g * p1[1]) * u + (p3[1] - p0[1] + h * p3[1]) * v + p0[1]) / w
    ];
  };
}

// Ground grid, 24 by 24 cells.
const floor = plane([[586, 670], [1145.5, 730], [1086, 1126], [264, 982]]);
for (let i = 0; i <= 24; i++) {
  if (i === 12) continue;
  draw('floor', seg(floor(i / 24, 0), floor(i / 24, 1)) + seg(floor(0, i / 24), floor(1, i / 24)));
}
draw('axes', seg(floor(.5, 0), floor(.5, 1)) + seg(floor(0, .5), floor(1, .5)));

// Ruler blade.
const left = [263, 275, 298, 322, 348, 374, 400, 425, 450, 475, 500, 524, 548, 572, 595, 618, 641, 664, 686, 709, 733, 757];
const right = [267, 279, 301, 327, 353, 379, 405, 431, 457, 482, 507, 531, 556, 580, 603, 627, 650, 673, 696, 719, 743, 766];
const rx = y => 945 - (y - 266) * .0235;
left.forEach((y, i) => {
  const r = right[i], a = [840, y], b = [rx(r), r];
  if (i === 2) return draw('model', seg(a, [878, 299]) + seg([906, 300], b), 'heavy');
  if (i === 20) return draw('model', seg(a, [873, 736]) + seg([899, 739], b) + seg([840, 735], [873, 738]) + seg([899, 741], b));
  if (i === 1 || i === 3 || i === 19) return draw('model', seg(a, mix(a, b, .25)) + seg(mix(a, b, .74), b), 'heavy');
  draw('model', seg(a, b) + (i > 6 ? seg([a[0], a[1] + 2], [b[0], b[1] + 2]) : ''), i > 6 ? '' : 'heavy');
});
draw('model', 'M840 263L840 845M945 266L931 844M866 321L862 709M892 266V284M892 312L886 724M917 325L909 713M866 264l2 13M919 266l-2 12', 'heavy');
draw('model', 'M845 263L843 845M844 263L842 845M941 266L928 844M942 266L929 844');
draw('model', 'M868 277Q892 272 917 279Q922 300 917 325Q892 329 867 322Q862 298 868 277z', 'heavy');
draw('model', 'M868 277L882 290M869 276L883 289M917 279L903 290M880 310L867 322M881 311L868 323M902 310L917 325M903 309L918 324');
draw('model', 'M878 299a14 14 0 1 0 28 0a14 14 0 1 0-28 0M881 299a11 12 0 1 0 22 0a11 12 0 1 0-22 0', 'heavy');
draw('model', 'M875 738a11 11 0 1 0 22 0a11 11 0 1 0-22 0', 'heavy');
draw('model', 'M872 738a14 14 0 1 0 28 0a14 14 0 1 0-28 0M863 712Q886 707 909 717Q914 740 909 762M863 714Q886 709 909 719M863 712Q859 735 862 757M863 712L877 728M865 712l14 15M909 717l-12 11M910 719l-12 11M878 748l-12 12M896 748l12 15M898 747l12 15M886 752v12');

// Handle block: each face is a mesh of lines between two opposite edges.
const T = { bl: [625, 727], fl: [606, 748], fr: [922, 786], br: [929, 763] };
const B = { bl: [628, 808], fl: [610, 829], fr: [918, 870], br: [931, 844] };
function mesh(a, b, c, d, along, across) {
  let s = '';
  along.forEach(t => { s += seg(mix(a, d, t), mix(b, c, t)); });
  across.forEach(t => { s += seg(mix(a, b, t), mix(d, c, t)); });
  draw('model', s);
}
const even = n => Array.from({ length: n + 1 }, (_, i) => i / n);
const ends = [0, .01, .025, .04, .07];
const cols = ends.concat(even(14), [.735, .75, .81, .87, .9, .95, .975, .99]);
mesh(T.bl, T.br, T.fr, T.fl, even(11), even(44));
mesh(T.bl, T.fr, T.fr, T.fl, even(5), []);
mesh(T.fl, T.fr, B.fr, B.fl, [0, .03, .06, .1, .4, .6, .88, .94, .97, 1], cols);
mesh(T.bl, T.br, B.br, B.bl, [0, .04, .08, .28, .52, .8, .95, 1], cols);
mesh(B.bl, B.br, B.fr, B.fl, even(6), even(22));
mesh(T.fl, T.bl, B.bl, B.fl, [0, .1, .5, .9, 1], even(5));
mesh(T.fr, T.br, B.br, B.fr, even(10), even(4));
// Brass plate at the blade end of the block.
mesh([841, 757], [929, 766], [918, 866], [838, 858], even(9), [.16, .3, .45, .6, .8, .93]);
draw('model', 'M840 808L922 818M853 775V850M606 750L922 787M625 727L929 763L931 844L918 870L610 829L606 748z', 'heavy');
```
